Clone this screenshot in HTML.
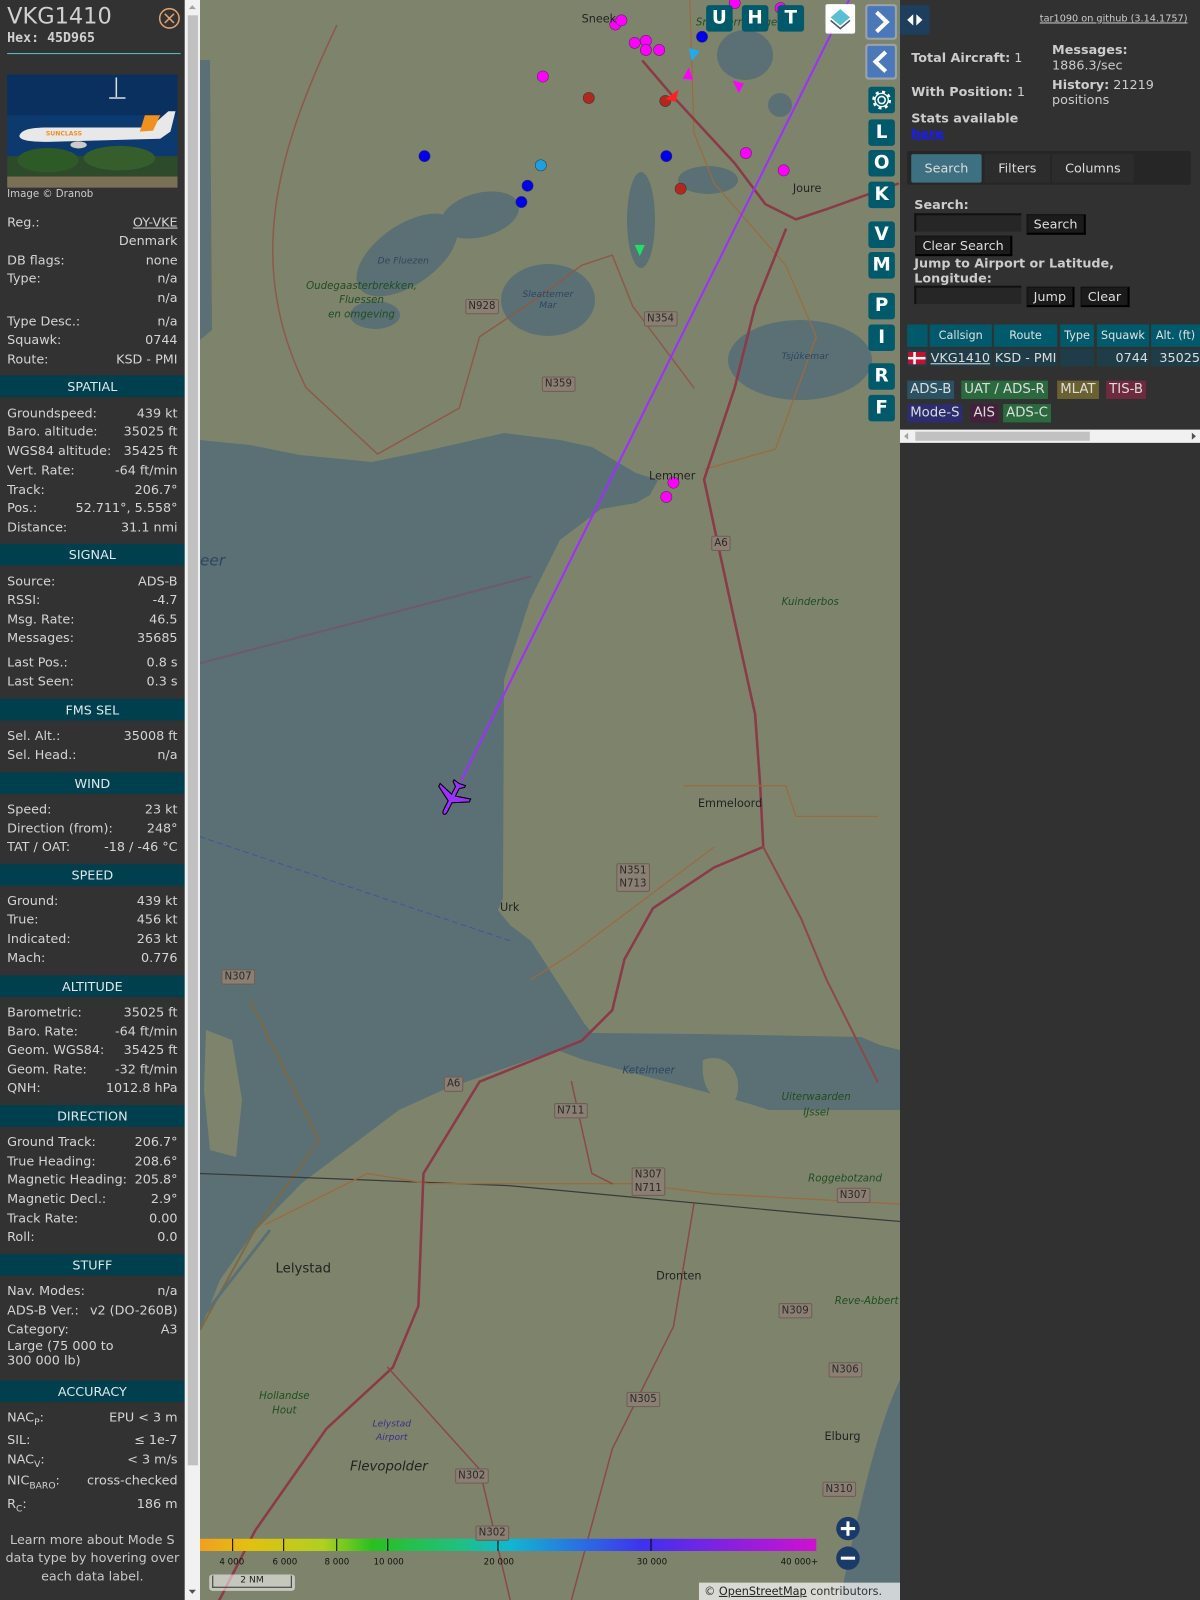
<!DOCTYPE html>
<html><head><meta charset="utf-8">
<style>
*{margin:0;padding:0;box-sizing:border-box}
html,body{width:1200px;height:1600px;overflow:hidden;background:#323232}
#w{position:absolute;left:0;top:0;width:1176px;height:1568px;transform:scale(1.020408);transform-origin:0 0;font-family:"DejaVu Sans","Liberation Sans",sans-serif;color:#d6d6d6}
.a{position:absolute}
#lp{position:absolute;left:0;top:0;width:181px;height:1568px;background:#323232}
.r{position:absolute;left:7px;width:167px;height:18px;line-height:18px;font-size:12.5px;white-space:nowrap;color:#d4d4d4}
.r b{font-weight:normal;float:right}
.h{position:absolute;left:0;width:181px;height:21px;line-height:21px;background:#003f4d;text-align:center;font-size:12.5px;color:#dfe8ea}
.mb{position:absolute;left:851px;width:26px;height:26px;background:#005a6b;border-radius:3px;color:#fff;font-weight:bold;font-size:18px;text-align:center;line-height:26px}
.tb{position:absolute;top:5px;width:26px;height:26px;background:#005a6b;border-radius:3px;color:#fff;font-weight:bold;font-size:18px;text-align:center;line-height:26px}
.sh{position:absolute;background:#8a7f72;border:1px solid #6e5e55;border-radius:2px;color:#2a2a2a;font-size:10px;padding:0 2px;line-height:13px;text-align:center}
.ml{position:absolute;font-size:11px;color:#222;white-space:nowrap}
.gl{position:absolute;font-size:10px;color:#1f4d1f;font-style:italic;white-space:nowrap;text-align:center}
.wl{position:absolute;font-size:9px;color:#2d4660;font-style:italic;white-space:nowrap;text-align:center}
.bd{position:absolute;height:18px;line-height:18px;font-size:13px;padding:0 3px;color:#ddd}
.th{position:absolute;top:318px;height:22px;line-height:22px;background:#005a6b;font-size:11px;text-align:center;color:#e0e0e0}
.td{position:absolute;top:342px;height:17px;line-height:17px;background:#1e3d48;font-size:12.5px;color:#ddd}
.btn{position:absolute;background:#1b1b1b;border:1px solid #111;border-right:2px solid #000;border-bottom:2px solid #000;font-size:12.5px;color:#ddd;line-height:17px;padding:0 6px}
.inp{position:absolute;background:#262626;border-top:2px solid #111;border-left:2px solid #111;width:105px;height:18px}
.cb{position:absolute;top:1526px;font-size:8.5px;color:#111}
</style></head><body>
<div id="w">

<!-- MAP -->
<svg class="a" style="left:196px;top:0" width="686" height="1568" viewBox="200 0 700 1600">
<rect x="200" y="0" width="700" height="1600" fill="#7e846c"/>
<path fill="#5b7074" d="M200,440 L250,445 L300,455 L372,462 L430,450 L504,433 L560,440 L592,447 L636,473 L658,480 L650,495 L636,503 L601,509 L560,540 L530,600 L504,680 L503,898 L498,910 L510,925 L531,941 L584,1023 L592,1033 L700,1034 L861,1037 L880,1045 L900,1050 L900,1110 L865,1110 L769,1110 L747,1103 L584,1060 L557,1050 L443,1090 L399,1110 L302,1183 L253,1233 L220,1280 L200,1330 Z"/>
<path fill="#5b7074" d="M200,60 L210,60 L212,330 L200,340 Z"/>
<path fill="#7e846c" d="M206,1030 L232,1040 L242,1100 L236,1157 L210,1150 L204,1090 Z"/>
<path fill="#7e846c" d="M703,1060 C730,1050 745,1080 735,1100 C715,1105 700,1090 703,1060Z"/>
<ellipse cx="407" cy="255" rx="58" ry="30" transform="rotate(-35 407 255)" fill="#5b7074"/>
<ellipse cx="375" cy="315" rx="25" ry="14" fill="#5b7074"/>
<ellipse cx="480" cy="215" rx="40" ry="22" transform="rotate(-15 480 215)" fill="#5b7074"/>
<ellipse cx="548" cy="300" rx="47" ry="36" fill="#5b7074"/>
<ellipse cx="800" cy="360" rx="72" ry="40" fill="#5b7074"/>
<ellipse cx="641" cy="220" rx="14" ry="48" fill="#5b7074"/>
<ellipse cx="708" cy="180" rx="30" ry="14" fill="#5b7074"/>
<ellipse cx="745" cy="55" rx="28" ry="25" fill="#5b7074"/>
<ellipse cx="780" cy="105" rx="12" ry="12" fill="#5b7074"/>
<path d="M250,1000 L319,1140 L253,1233 L200,1330" stroke="#7b6a45" stroke-width="2" fill="none"/>
<path d="M200,1320 L270,1230" stroke="#5b7074" stroke-width="3" fill="none"/>
<rect x="200" y="1480" width="700" height="120" fill="#7e846c"/>
<path d="M840,1600 C860,1500 880,1420 900,1380 L900,1600Z" fill="#5b7074"/>
</svg>

<svg class="a" style="left:0;top:0" width="1176" height="1568" viewBox="0 0 1176 1568">
<g fill="none" stroke-linecap="round">
<path d="M196,820 L500,922" stroke="#3a5a9a" stroke-width="1" stroke-dasharray="5,4"/>
<path d="M196,650 L520,565" stroke="#6e5a6e" stroke-width="2"/>
<path d="M196,1150 L500,1162 L800,1190 L882,1197" stroke="#3a3a3a" stroke-width="1.2"/>
<path d="M260,1200 C300,1180 320,1170 360,1150 L420,1160 L620,1160 L700,1170 L882,1180" stroke="#9a6a40" stroke-width="1.3"/>
<path d="M676,0 L680,130 L700,180 L770,260 L800,330 L760,440 L690,460" stroke="#9a6a40" stroke-width="1.2"/>
<path d="M330,25 C270,150 240,260 300,380 L370,445 L450,400 L470,330 L530,290 L570,260 L600,250 L620,300 L650,340 L680,380" stroke="#8c5a4a" stroke-width="1.5"/>
<path d="M630,60 L660,95 L720,160 L750,200 L780,215 L810,205 L880,180" stroke="#8a3a48" stroke-width="2.5"/>
<path d="M770,225 L740,300 L720,380 L700,440 L690,470 L705,540 L718,600 L740,700 L745,770 L748,830" stroke="#8a3a48" stroke-width="2.5"/>
<path d="M748,830 L700,850 L640,890 L612,940 L600,990 L570,1020 L470,1060 L415,1150 L410,1280 L385,1340 L320,1400 L250,1500 L215,1568" stroke="#8a3a48" stroke-width="2.5"/>
<path d="M748,830 L785,900 L810,960 L860,1060" stroke="#8a4a48" stroke-width="2"/>
<path d="M560,1060 L580,1150 L600,1160" stroke="#8a4a48" stroke-width="1.5"/>
<path d="M680,1180 L660,1300 L600,1420 L560,1568" stroke="#8a4a48" stroke-width="1.5"/>
<path d="M380,1340 L470,1440 L500,1568" stroke="#8a4a48" stroke-width="1.5"/>
<path d="M670,770 L770,770 L780,800 L860,800" stroke="#9a6a40" stroke-width="1.2"/>
<path d="M520,960 L560,935 L700,830" stroke="#9a6a40" stroke-width="1.2"/>
<path d="M816,30 L452,765" stroke="#9b30ff" stroke-width="2"/>
<path d="M816,30 L832,0" stroke="#9b30ff" stroke-width="2"/>
</g>
<g transform="translate(443,782) rotate(207) scale(1.05)">
<path d="M0,-17 C1.5,-17 2,-15 2,-13 L2,-4 L16,4 L16,7 L2,3 L2,11 L6,14 L6,16 L0,15 L-6,16 L-6,14 L-2,11 L-2,3 L-16,7 L-16,4 L-2,-4 L-2,-13 C-2,-15 -1.5,-17 0,-17Z" fill="#9b30ff" stroke="#000" stroke-width="1"/>
</g>
<g fill="#ff00ff" stroke="#333" stroke-width="0.5">
<circle cx="532" cy="75" r="5.5"/><circle cx="603" cy="24" r="5.5"/><circle cx="609" cy="20" r="5.5"/><circle cx="622" cy="42" r="5.5"/><circle cx="633" cy="40" r="5.5"/><circle cx="646" cy="49" r="5.5"/><circle cx="633" cy="49" r="5.5"/><circle cx="660" cy="473" r="5.5"/><circle cx="653" cy="487" r="5.5"/><circle cx="731" cy="150" r="5.5"/><circle cx="768" cy="167" r="5.5"/><circle cx="720" cy="3" r="5.5"/><circle cx="765" cy="8" r="5.5"/>
</g>
<g fill="#0000ee" stroke="#333" stroke-width="0.5">
<circle cx="416" cy="153" r="5.5"/><circle cx="517" cy="182" r="5.5"/><circle cx="511" cy="198" r="5.5"/><circle cx="653" cy="153" r="5.5"/><circle cx="688" cy="36" r="5.5"/>
</g>
<circle cx="530" cy="162" r="5.5" fill="#1ea0e0" stroke="#333" stroke-width="0.5"/>
<g fill="#b0281e" stroke="#333" stroke-width="0.5"><circle cx="577" cy="96" r="5.5"/><circle cx="667" cy="185" r="5.5"/><circle cx="652" cy="99" r="5.5"/></g>
<path d="M622,240 L632,240 L627,251Z" fill="#22dd66"/>
<path d="M675,47 L686,50 L678,60Z" fill="#22aaee"/>
<path d="M638,306 L649,306 L643,318Z" fill="#22aaee"/>
<path d="M675,66 L679,78 L669,77Z" fill="#ff00ff"/>
<path d="M718,79 L729,82 L724,91Z" fill="#ff00ff"/>
<path d="M652,97 L665,88 L662,100Z" fill="#ff2020"/>
<!-- color bar -->
<defs><linearGradient id="cg" x1="0" x2="1">
<stop offset="0" stop-color="#f0a020"/><stop offset="0.08" stop-color="#e2c010"/><stop offset="0.2" stop-color="#b0d020"/><stop offset="0.28" stop-color="#28c020"/><stop offset="0.42" stop-color="#20c080"/><stop offset="0.5" stop-color="#10b8d0"/><stop offset="0.72" stop-color="#4030f0"/><stop offset="1" stop-color="#d010d0"/>
</linearGradient></defs>
<rect x="196" y="1508" width="604" height="12" fill="url(#cg)"/>
<g stroke="#000" stroke-width="1"><path d="M228,1508V1520M278,1508V1520M330,1508V1520M380,1508V1520M488,1508V1520M638,1508V1520"/></g>
<circle cx="831" cy="1498" r="11.5" fill="#1a3a6a"/><path d="M824,1498H838M831,1491V1505" stroke="#fff" stroke-width="3"/>
<circle cx="831" cy="1527" r="11.5" fill="#1a3a6a"/><path d="M824,1527H838" stroke="#fff" stroke-width="3"/>
</svg>
<div class="cb" style="left:215px">4 000</div><div class="cb" style="left:267px">6 000</div><div class="cb" style="left:318px">8 000</div><div class="cb" style="left:366px">10 000</div><div class="cb" style="left:474px">20 000</div><div class="cb" style="left:624px">30 000</div><div class="cb" style="left:765px">40 000+</div>
<div class="a" style="left:205px;top:1543px;width:84px;height:16px;background:rgba(255,255,255,.55);border-radius:3px;font-size:9px;color:#222;text-align:center;line-height:15px;"><div style="margin:1px 3px;border:1px solid #333;border-top:none;height:12px;line-height:11px">2 NM</div></div>
<div class="a" style="left:685px;top:1551px;width:197px;height:17px;background:rgba(255,255,255,.7);font-size:11px;color:#333;line-height:17px;padding-left:5px">© <u style="color:#222">OpenStreetMap</u> contributors.</div>

<!-- map labels -->
<div class="ml" style="left:570px;top:12px">Sneek</div>
<div class="ml" style="left:777px;top:178px">Joure</div>
<div class="ml" style="left:636px;top:460px">Lemmer</div>
<div class="ml" style="left:684px;top:781px">Emmeloord</div>
<div class="ml" style="left:490px;top:883px">Urk</div>
<div class="ml" style="left:270px;top:1236px;font-size:13px">Lelystad</div>
<div class="ml" style="left:643px;top:1244px">Dronten</div>
<div class="ml" style="left:808px;top:1401px">Elburg</div>
<div class="ml" style="left:343px;top:1430px;font-size:13px;font-style:italic">Flevopolder</div>
<div class="gl" style="left:300px;top:274px;line-height:14px">Oudegaasterbrekken,<br>Fluessen<br>en omgeving</div>
<div class="wl" style="left:370px;top:251px">De Fluezen</div>
<div class="wl" style="left:512px;top:284px;line-height:11px">Sleattemer<br>Mar</div>
<div class="wl" style="left:766px;top:345px">Tsjûkemar</div>
<div class="wl" style="left:610px;top:1044px;font-size:10px">Ketelmeer</div>
<div class="gl" style="left:766px;top:585px">Kuinderbos</div>
<div class="gl" style="left:766px;top:1068px;line-height:15px">Uiterwaarden<br>IJssel</div>
<div class="gl" style="left:792px;top:1150px">Roggebotzand</div>
<div class="gl" style="left:818px;top:1270px">Reve-Abbert</div>
<div class="gl" style="left:254px;top:1362px;line-height:14px">Hollandse<br>Hout</div>
<div class="wl" style="left:365px;top:1390px;line-height:13px;color:#3a2d8a">Lelystad<br>Airport</div>
<div class="gl" style="left:682px;top:17px">Sneekermeergebied</div>
<div class="wl" style="left:196px;top:540px;font-size:15px">eer</div>
<div class="sh" style="left:456px;top:293px">N928</div>
<div class="sh" style="left:631px;top:305px">N354</div>
<div class="sh" style="left:531px;top:369px">N359</div>
<div class="sh" style="left:697px;top:525px">A6</div>
<div class="sh" style="left:604px;top:846px">N351<br>N713</div>
<div class="sh" style="left:217px;top:950px">N307</div>
<div class="sh" style="left:435px;top:1055px">A6</div>
<div class="sh" style="left:543px;top:1081px">N711</div>
<div class="sh" style="left:619px;top:1144px">N307<br>N711</div>
<div class="sh" style="left:820px;top:1164px">N307</div>
<div class="sh" style="left:763px;top:1277px">N309</div>
<div class="sh" style="left:812px;top:1335px">N306</div>
<div class="sh" style="left:614px;top:1364px">N305</div>
<div class="sh" style="left:446px;top:1439px">N302</div>
<div class="sh" style="left:806px;top:1452px">N310</div>
<div class="sh" style="left:466px;top:1495px">N302</div>

<!-- map buttons -->
<div class="tb" style="left:692px">U</div><div class="tb" style="left:727px">H</div><div class="tb" style="left:762px">T</div>
<div class="a" style="left:809px;top:4px;width:29px;height:29px;background:#fff;border-radius:2px"><svg width="29" height="29"><path d="M14.5,5 L24,13 L14.5,21 L5,13Z" fill="#58c0d0"/><path d="M5,16 L14.5,24 L24,16" stroke="#456" stroke-width="1.5" fill="none"/></svg></div>
<div class="a" style="left:848px;top:4px;width:31px;height:35px;background:#9aa4a8;border-radius:3px;padding:2px"><div style="background:#4a78b8;width:27px;height:31px;border-radius:2px"><svg width="27" height="31"><path d="M9,6 L19,15.5 L9,25" stroke="#fff" stroke-width="4" fill="none"/></svg></div></div>
<div class="a" style="left:848px;top:43px;width:31px;height:35px;background:#9aa4a8;border-radius:3px;padding:2px"><div style="background:#4a78b8;width:27px;height:31px;border-radius:2px"><svg width="27" height="31"><path d="M18,6 L8,15.5 L18,25" stroke="#fff" stroke-width="4" fill="none"/></svg></div></div>
<div class="mb" style="top:85px"><svg width="26" height="26"><circle cx="13" cy="13" r="3.5" stroke="#fff" stroke-width="1.5" fill="none"/><circle cx="13" cy="13" r="8" stroke="#fff" stroke-width="2.5" stroke-dasharray="3,3.3" fill="none"/><circle cx="13" cy="13" r="6.5" stroke="#fff" stroke-width="1.3" fill="none"/></svg></div>
<div class="mb" style="top:117px">L</div><div class="mb" style="top:147px">O</div><div class="mb" style="top:178px">K</div><div class="mb" style="top:217px">V</div><div class="mb" style="top:247px">M</div><div class="mb" style="top:287px">P</div><div class="mb" style="top:318px">I</div><div class="mb" style="top:356px">R</div><div class="mb" style="top:387px">F</div>

<!-- LEFT PANEL -->
<div id="lp">
<div class="a" style="left:7px;top:4px;font-size:22px;color:#d0d0d0">VKG1410</div>
<div class="a" style="left:7px;top:30px;font-size:13px;font-weight:bold;font-family:'DejaVu Sans Mono',monospace;color:#d0d0d0">Hex: 45D965</div>
<svg class="a" style="left:155px;top:7px" width="22" height="22"><circle cx="11" cy="11" r="9.5" stroke="#e0a070" stroke-width="1.5" fill="none"/><path d="M6.5,6.5L15.5,15.5M15.5,6.5L6.5,15.5" stroke="#e0a070" stroke-width="1.5"/></svg>
<div class="a" style="left:7px;top:52px;width:170px;height:1px;background:#58c0c8"></div>
<svg class="a" style="left:7px;top:73px" width="167" height="111">
<rect width="167" height="111" fill="#0c3a6e"/><rect y="0" width="167" height="40" fill="#0a3060"/>
<rect y="80" width="167" height="31" fill="#2d4a2a"/><ellipse cx="40" cy="84" rx="30" ry="12" fill="#2e5a28"/><ellipse cx="110" cy="82" rx="35" ry="12" fill="#355e2c"/>
<rect y="100" width="167" height="11" fill="#7a7055"/>
<path d="M12,60 C14,55 20,52 40,52 L140,52 L158,36 L165,36 L160,56 L150,63 L40,66 C20,66 12,64 12,60Z" fill="#e8e8e8"/>
<path d="M135,40 L150,40 L143,55 L130,56Z" fill="#f09020"/><text x="38" y="60" font-size="6" fill="#f09020" font-weight="bold" font-family="DejaVu Sans">SUNCLASS</text>
<ellipse cx="70" cy="69" rx="8" ry="3.5" fill="#ccc"/>
<path d="M107,3 L107,22 M100,23 L116,23" stroke="#ddd" stroke-width="1.5"/>
</svg>
<div class="a" style="left:7px;top:185px;font-size:10px;color:#ccc">Image © Dranob</div>

<div class="r" style="top:209px">Reg.:<b style="text-decoration:underline">OY-VKE</b></div>
<div class="r" style="top:227px"><b>Denmark</b></div>
<div class="r" style="top:246px">DB flags:<b>none</b></div>
<div class="r" style="top:264px">Type:<b>n/a</b></div>
<div class="r" style="top:283px"><b>n/a</b></div>
<div class="r" style="top:306px">Type Desc.:<b>n/a</b></div>
<div class="r" style="top:324px">Squawk:<b>0744</b></div>
<div class="r" style="top:343px">Route:<b>KSD - PMI</b></div>
<div class="h" style="top:368px">SPATIAL</div>
<div class="r" style="top:396px">Groundspeed:<b>439 kt</b></div>
<div class="r" style="top:414px">Baro. altitude:<b>35025 ft</b></div>
<div class="r" style="top:433px">WGS84 altitude:<b>35425 ft</b></div>
<div class="r" style="top:452px">Vert. Rate:<b>-64 ft/min</b></div>
<div class="r" style="top:471px">Track:<b>206.7°</b></div>
<div class="r" style="top:489px">Pos.:<b>52.711°, 5.558°</b></div>
<div class="r" style="top:508px">Distance:<b>31.1 nmi</b></div>
<div class="h" style="top:533px">SIGNAL</div>
<div class="r" style="top:561px">Source:<b>ADS-B</b></div>
<div class="r" style="top:579px">RSSI:<b>-4.7</b></div>
<div class="r" style="top:598px">Msg. Rate:<b>46.5</b></div>
<div class="r" style="top:616px">Messages:<b>35685</b></div>
<div class="r" style="top:640px">Last Pos.:<b>0.8 s</b></div>
<div class="r" style="top:659px">Last Seen:<b>0.3 s</b></div>
<div class="h" style="top:685px">FMS SEL</div>
<div class="r" style="top:712px">Sel. Alt.:<b>35008 ft</b></div>
<div class="r" style="top:731px">Sel. Head.:<b>n/a</b></div>
<div class="h" style="top:757px">WIND</div>
<div class="r" style="top:784px">Speed:<b>23 kt</b></div>
<div class="r" style="top:803px">Direction (from):<b>248°</b></div>
<div class="r" style="top:821px">TAT / OAT:<b>-18 / -46 °C</b></div>
<div class="h" style="top:847px">SPEED</div>
<div class="r" style="top:874px">Ground:<b>439 kt</b></div>
<div class="r" style="top:892px">True:<b>456 kt</b></div>
<div class="r" style="top:911px">Indicated:<b>263 kt</b></div>
<div class="r" style="top:930px">Mach:<b>0.776</b></div>
<div class="h" style="top:956px">ALTITUDE</div>
<div class="r" style="top:983px">Barometric:<b>35025 ft</b></div>
<div class="r" style="top:1002px">Baro. Rate:<b>-64 ft/min</b></div>
<div class="r" style="top:1020px">Geom. WGS84:<b>35425 ft</b></div>
<div class="r" style="top:1039px">Geom. Rate:<b>-32 ft/min</b></div>
<div class="r" style="top:1057px">QNH:<b>1012.8 hPa</b></div>
<div class="h" style="top:1083px">DIRECTION</div>
<div class="r" style="top:1110px">Ground Track:<b>206.7°</b></div>
<div class="r" style="top:1129px">True Heading:<b>208.6°</b></div>
<div class="r" style="top:1147px">Magnetic Heading:<b>205.8°</b></div>
<div class="r" style="top:1166px">Magnetic Decl.:<b>2.9°</b></div>
<div class="r" style="top:1185px">Track Rate:<b>0.00</b></div>
<div class="r" style="top:1203px">Roll:<b>0.0</b></div>
<div class="h" style="top:1229px">STUFF</div>
<div class="r" style="top:1256px">Nav. Modes:<b>n/a</b></div>
<div class="r" style="top:1275px">ADS-B Ver.:<b>v2 (DO-260B)</b></div>
<div class="r" style="top:1294px">Category:<b>A3</b></div>
<div class="r" style="top:1312px;height:32px;line-height:14px;white-space:normal">Large (75 000 to<br>300 000 lb)</div>
<div class="h" style="top:1353px">ACCURACY</div>
<div class="r" style="top:1380px">NAC<sub style="font-size:9px">P</sub>:<b>EPU &lt; 3 m</b></div>
<div class="r" style="top:1402px">SIL:<b>≤ 1e-7</b></div>
<div class="r" style="top:1421px">NAC<sub style="font-size:9px">V</sub>:<b>&lt; 3 m/s</b></div>
<div class="r" style="top:1442px">NIC<sub style="font-size:9px">BARO</sub>:<b>cross-checked</b></div>
<div class="r" style="top:1465px">R<sub style="font-size:9px">C</sub>:<b>186 m</b></div>
<div class="a" style="left:0;top:1500px;width:181px;text-align:center;font-size:12.5px;line-height:18px;color:#c8c8c8">Learn more about Mode S data type by hovering over each data label.</div>
</div>
<!-- left scrollbar -->
<div class="a" style="left:181px;top:0;width:15px;height:1568px;background:#f1f1f1"></div>
<div class="a" style="left:184px;top:15px;width:10px;height:1421px;background:#c1c1c1"></div>
<svg class="a" style="left:181px;top:0" width="15" height="1568"><path d="M4,9 L7.5,5 L11,9Z" fill="#a3a3a3"/><path d="M4,1558 L7.5,1562 L11,1558Z" fill="#505050"/></svg>

<!-- RIGHT PANEL -->
<div class="a" style="left:882px;top:0;width:294px;height:1568px;background:#313131">
<div class="a" style="left:0;top:5px;width:29px;height:29px;background:#1e3e5e;border-radius:2px"><svg width="29" height="29"><path d="M13,9 L7,14.5 L13,20Z M16,9 L22,14.5 L16,20Z" fill="#fff"/></svg></div>
<div class="a" style="left:137px;top:13px;font-size:9.5px;color:#ccc;text-decoration:underline">tar1090 on github (3.14.1757)</div>
<div class="a" style="left:11px;top:49px;font-size:12.5px;color:#ccc"><b>Total Aircraft:</b> 1</div>
<div class="a" style="left:11px;top:82px;font-size:12.5px;color:#ccc"><b>With Position:</b> 1</div>
<div class="a" style="left:11px;top:108px;font-size:12.5px;color:#ccc;line-height:15px"><b>Stats available</b><br><b style="color:#1a1aff;text-decoration:underline">here</b></div>
<div class="a" style="left:149px;top:41px;font-size:12.5px;color:#ccc;line-height:15px"><b>Messages:</b><br>1886.3/sec</div>
<div class="a" style="left:149px;top:75px;font-size:12.5px;color:#ccc;line-height:15px"><b>History:</b> 21219<br>positions</div>
<div class="a" style="left:7px;top:148px;width:278px;height:33px;background:#262626;border-radius:2px"></div>
<div class="a" style="left:11px;top:151px;width:69px;height:28px;background:#3d7080;border-radius:2px;font-size:12.5px;line-height:28px;text-align:center;color:#ddd">Search</div>
<div class="a" style="left:83px;top:151px;width:64px;height:28px;background:#2c2c2c;font-size:12.5px;line-height:28px;text-align:center;color:#ddd">Filters</div>
<div class="a" style="left:149px;top:151px;width:80px;height:28px;background:#2c2c2c;font-size:12.5px;line-height:28px;text-align:center;color:#ddd">Columns</div>
<div class="a" style="left:14px;top:193px;font-size:12.5px;font-weight:bold;color:#ccc">Search:</div>
<div class="inp" style="left:14px;top:209px"></div>
<div class="btn" style="left:124px;top:210px">Search</div>
<div class="btn" style="left:15px;top:231px">Clear Search</div>
<div class="a" style="left:14px;top:250px;font-size:12.5px;font-weight:bold;color:#ccc;line-height:15px">Jump to Airport or Latitude,<br>Longitude:</div>
<div class="inp" style="left:14px;top:280px"></div>
<div class="btn" style="left:124px;top:281px">Jump</div>
<div class="btn" style="left:177px;top:281px">Clear</div>
</div>
<div class="th" style="left:889px;width:20px"></div>
<div class="th" style="left:911px;width:61px">Callsign</div>
<div class="th" style="left:974px;width:62px">Route</div>
<div class="th" style="left:1039px;width:33px">Type</div>
<div class="th" style="left:1075px;width:51px">Squawk</div>
<div class="th" style="left:1128px;width:48px">Alt. (ft)</div>
<div class="td" style="left:889px;width:20px;background:#1e3d48"><svg width="20" height="17"><rect x="1" y="3" width="17" height="12" fill="#c8102e"/><rect x="6" y="3" width="2.5" height="12" fill="#fff"/><rect x="1" y="7.8" width="17" height="2.4" fill="#fff"/></svg></div>
<div class="td" style="left:911px;width:61px;padding-left:1px;text-decoration:underline">VKG1410</div>
<div class="td" style="left:974px;width:62px;padding-left:1px">KSD - PMI</div>
<div class="td" style="left:1039px;width:33px"></div>
<div class="td" style="left:1075px;width:51px;text-align:right;padding-right:1px">0744</div>
<div class="td" style="left:1128px;width:48px;text-align:right">35025</div>
<div class="bd" style="left:889px;top:373px;background:#2a5262">ADS-B</div>
<div class="bd" style="left:942px;top:373px;background:#2a6a3e">UAT / ADS-R</div>
<div class="bd" style="left:1036px;top:373px;background:#6a6030">MLAT</div>
<div class="bd" style="left:1084px;top:373px;background:#6e2a3e">TIS-B</div>
<div class="bd" style="left:889px;top:396px;background:#2c2c70">Mode-S</div>
<div class="bd" style="left:951px;top:396px;background:#44203c">AIS</div>
<div class="bd" style="left:983px;top:396px;background:#2a6a3e">ADS-C</div>
<div class="a" style="left:882px;top:421px;width:294px;height:13px;background:#f1f1f1"></div>
<div class="a" style="left:897px;top:423px;width:171px;height:9px;background:#c1c1c1"></div>
<svg class="a" style="left:882px;top:421px" width="294" height="13"><path d="M8,3 L4,6.5 L8,10Z" fill="#a3a3a3"/><path d="M286,3 L290,6.5 L286,10Z" fill="#505050"/></svg>
</div>
</body></html>
